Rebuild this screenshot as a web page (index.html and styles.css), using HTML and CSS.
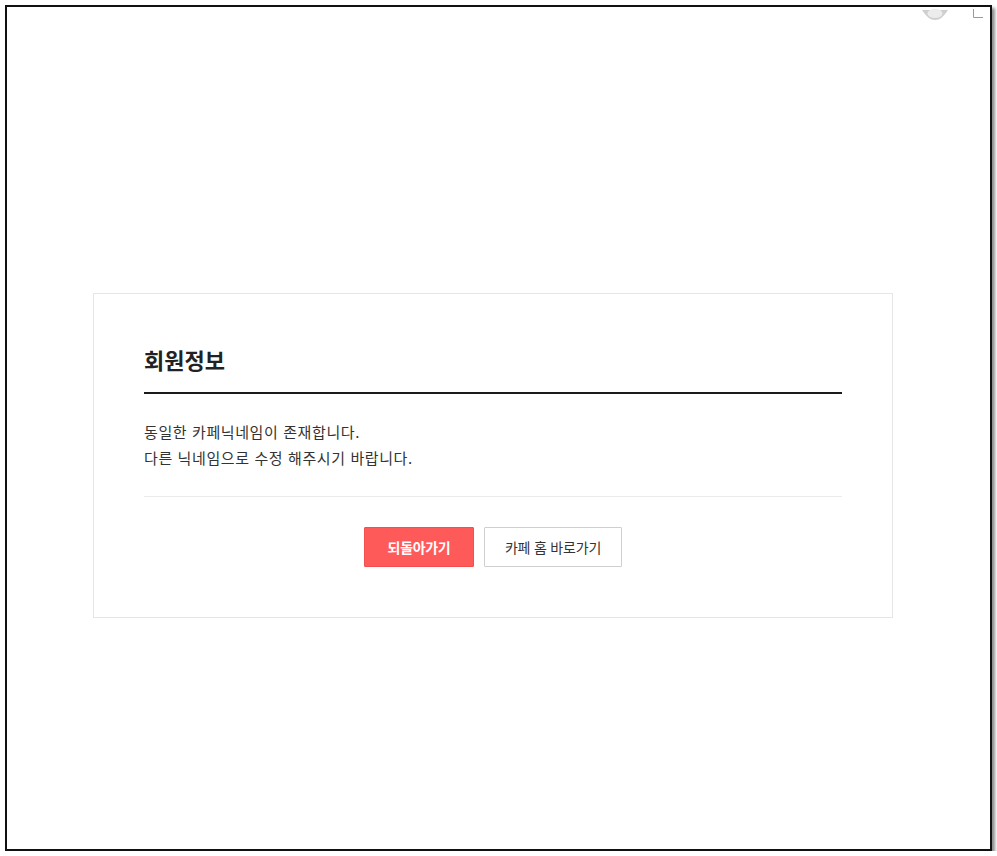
FILE: index.html
```html
<!DOCTYPE html>
<html lang="ko">
<head>
<meta charset="utf-8">
<title>회원정보</title>
<link rel="stylesheet" href="styles.css">
</head>
<body>
<div class="frame">
  <div class="deco">
    <svg class="deco-cup" width="26" height="12" viewBox="0 0 26 12"><path d="M0 1 H26 Q20 11 13 11 Q6 11 0 1 Z" fill="#cfcfcf"/><ellipse cx="13" cy="4.5" rx="7.5" ry="4.5" fill="#ececec"/></svg>
    <svg class="deco-corner" width="12" height="10" viewBox="0 0 12 10"><path d="M1.5 0 V8.5 H11" fill="none" stroke="#9a9a9a" stroke-width="1"/></svg>
  </div>
  <div class="card">
    <h2 class="title">회원정보</h2>
    <div class="message">
      <p>동일한 카페닉네임이 존재합니다.</p>
      <p>다른 닉네임으로 수정 해주시기 바랍니다.</p>
    </div>
    <div class="actions">
      <button class="btn btn-primary" type="button">되돌아가기</button>
      <button class="btn btn-secondary" type="button">카페 홈 바로가기</button>
    </div>
  </div>
</div>
</body>
</html>
```
FILE: styles.css
```css
* { box-sizing: border-box; }
html, body { margin: 0; padding: 0; background: #fff; }
body {
  font-family: "Noto Sans CJK KR", "Noto Sans", sans-serif;
  color: #333;
}
.frame {
  position: relative;
  margin: 5px 0 0 5px;
  width: 987px;
  height: 846px;
  border: 2px solid #111;
  box-shadow: 3px 3px 3px rgba(0,0,0,0.45);
  padding-top: 286px;
  padding-left: 86px;
}
.deco { position: absolute; top: 1px; right: 6px; display: flex; align-items: flex-start; gap: 24px; }
.deco-cup { margin-top: 1px; }
.deco-corner { margin-top: 1px; }
.card {
  width: 800px;
  border: 1px solid #e6e6e6;
  padding: 50px 50px 50px;
  background: #fff;
}
.title {
  margin: 0;
  font-size: 22px;
  font-weight: bold;
  line-height: 30px;
  color: #222;
  padding-bottom: 18px;
  border-bottom: 2px solid #1a1a1a;
}
.message {
  padding: 25px 0 25px;
  border-bottom: 1px solid #ebebeb;
}
.message p {
  margin: 0;
  font-size: 15px;
  line-height: 26px;
  color: #333;
  letter-spacing: 0.6px;
}
.actions {
  display: flex;
  justify-content: center;
  gap: 10px;
  padding-top: 30px;
}
.btn {
  height: 40px;
  font-family: inherit;
  border-radius: 1px;
  cursor: pointer;
  padding: 0;
}
.btn-primary {
  width: 110px;
  background: #ff5a5a;
  border: 1px solid #f25050;
  color: #fff;
  font-weight: bold;
  font-size: 14px;
  letter-spacing: -0.3px;
}
.btn-secondary {
  width: 138px;
  background: #fff;
  border: 1px solid #cfcfcf;
  color: #333;
  font-size: 14px;
  letter-spacing: -0.2px;
}
```
